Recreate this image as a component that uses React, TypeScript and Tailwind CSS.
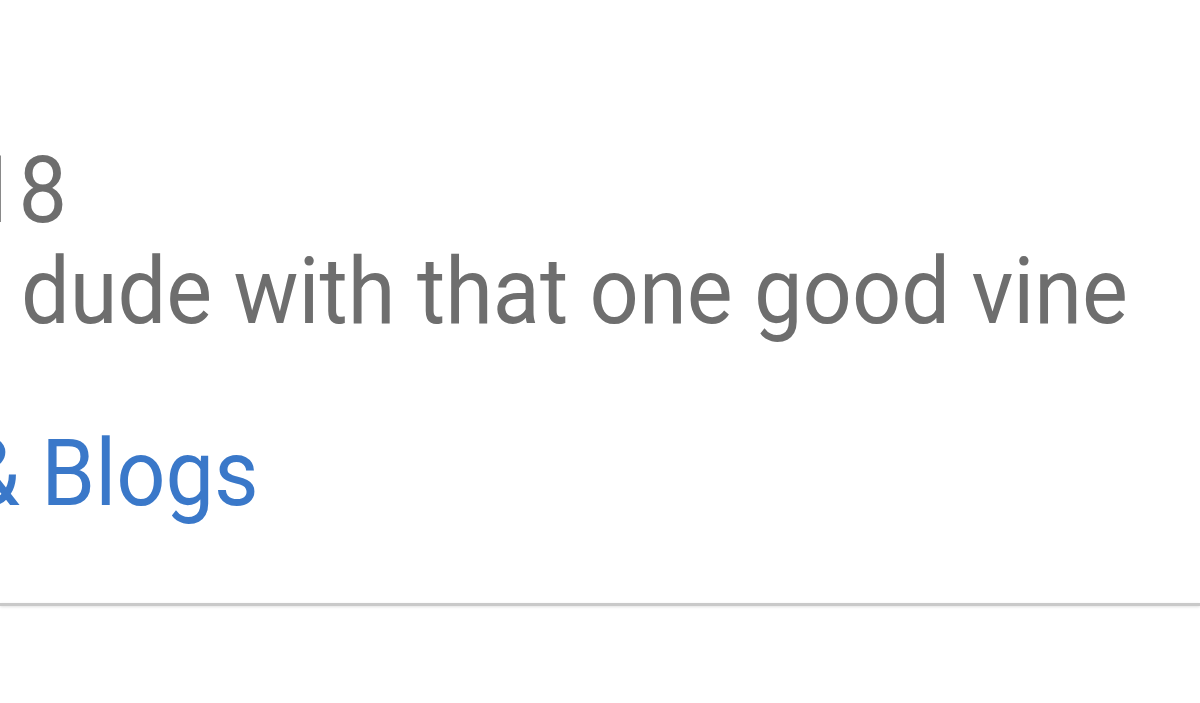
const line = "origin-left scale-x-[0.94] whitespace-nowrap text-[92px] leading-[101px]";

export default function App() {
  return (
    <div className="h-[703px] w-[1200px] overflow-hidden bg-white" style={{ fontFamily: "Roboto, 'Noto Sans', sans-serif" }}>
      <div className="flex flex-col pt-[140px]">
        <div className={`-ml-[30.5px] text-[#6e6e6e] ${line}`}>18</div>
        <div className={`ml-[21px] text-[#6e6e6e] ${line}`}>dude with that one good vine</div>
        <div className={`-ml-[34px] mt-[81px] text-[#3a78c9] ${line}`}>&amp; Blogs</div>
      </div>
      <div className="mt-[79px] h-[3px] w-full bg-[#c9c9c9] shadow-[0_1px_3px_rgba(0,0,0,0.12)]" />
    </div>
  );
}
